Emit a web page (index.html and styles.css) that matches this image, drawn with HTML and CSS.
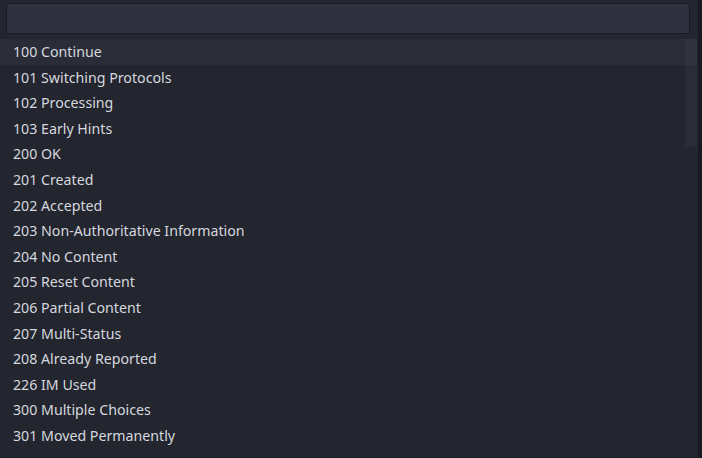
FILE: index.html
```html
<!DOCTYPE html>
<html lang="en">
<head>
  <meta charset="UTF-8">
  <meta name="viewport" content="width=device-width, initial-scale=1.0">
  <title>Status Codes</title>
  <link rel="stylesheet" href="styles.css">
</head>
<body>

<div class="panel">
  <div class="search-row">
    <input class="search" type="text" aria-label="Search status codes">
  </div>

  <div class="list-wrap">
    <ul class="codes">
      <li class="selected">100 Continue</li>
      <li>101 Switching Protocols</li>
      <li>102 Processing</li>
      <li>103 Early Hints</li>
      <li>200 OK</li>
      <li>201 Created</li>
      <li>202 Accepted</li>
      <li>203 Non-Authoritative Information</li>
      <li>204 No Content</li>
      <li>205 Reset Content</li>
      <li>206 Partial Content</li>
      <li>207 Multi-Status</li>
      <li>208 Already Reported</li>
      <li>226 IM Used</li>
      <li>300 Multiple Choices</li>
      <li>301 Moved Permanently</li>
    </ul>
    <div class="scroll-thumb"></div>
  </div>
</div>

</body>
</html>
```

FILE: styles.css
```css
body {
  margin: 0;
  padding: 0;
  background-color: #1a1b22;
  font-family: 'Noto Sans', 'Open Sans', sans-serif;
  overflow: hidden;
}

.panel {
  width: 698px;
  height: 457px;
  background-color: #23252f;
  overflow: hidden;
}

.search-row {
  padding: 3px 8px 0 6px;
  height: 36px;
  box-sizing: border-box;
}

.search {
  display: block;
  width: 684px;
  height: 31px;
  box-sizing: border-box;
  margin: 0;
  background-color: #2f313e;
  border: 1px solid #1a1c24;
  border-radius: 0;
  color: #d4d7de;
  outline: none;
}

.list-wrap {
  position: relative;
  width: 697px;
  margin-top: 3px;
}

.codes {
  list-style: none;
  margin: 0;
  padding: 0;
}

.codes li {
  height: 25.6px;
  line-height: 25.6px;
  padding-left: 13px;
  font-size: 14.2px;
  color: #d5d8df;
}

.codes li.selected {
  background-color: #2a2c37;
}

/* scrollbar thumb drawn over the list */
.scroll-thumb {
  position: absolute;
  top: 0;
  right: 0;
  width: 12px;
  height: 108px;
  background-color: rgba(255, 255, 255, 0.035);
}
```
